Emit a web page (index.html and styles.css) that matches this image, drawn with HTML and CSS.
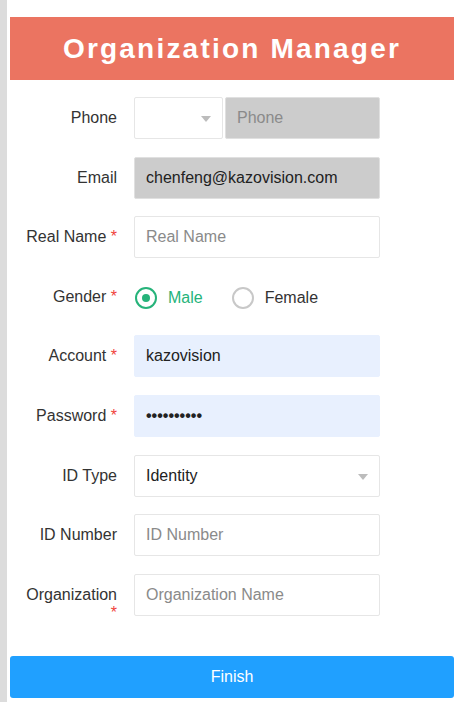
FILE: index.html
```html
<!DOCTYPE html>
<html lang="en">
<head>
<meta charset="utf-8">
<title>Organization Manager</title>
<link rel="stylesheet" href="styles.css">
</head>
<body>
<div class="strip"></div>
<div class="main">
  <header class="banner">Organization Manager</header>
  <form class="form">
    <div class="row">
      <label class="label">Phone</label>
      <div class="field phone">
        <div class="select small"><span class="arrow"></span></div>
        <div class="input disabled"><span class="ph">Phone</span></div>
      </div>
    </div>
    <div class="row">
      <label class="label">Email</label>
      <div class="field">
        <div class="input disabled"><span class="val">chenfeng@kazovision.com</span></div>
      </div>
    </div>
    <div class="row">
      <label class="label">Real Name <span class="req">*</span></label>
      <div class="field">
        <div class="input"><span class="ph">Real Name</span></div>
      </div>
    </div>
    <div class="row">
      <label class="label">Gender <span class="req">*</span></label>
      <div class="field radios">
        <span class="radio checked"><span class="dot"></span></span><span class="rlabel on">Male</span>
        <span class="radio"></span><span class="rlabel">Female</span>
      </div>
    </div>
    <div class="row">
      <label class="label">Account <span class="req">*</span></label>
      <div class="field">
        <div class="input auto"><span class="val">kazovision</span></div>
      </div>
    </div>
    <div class="row">
      <label class="label">Password <span class="req">*</span></label>
      <div class="field">
        <div class="input auto"><span class="val pw">••••••••••</span></div>
      </div>
    </div>
    <div class="row">
      <label class="label">ID Type</label>
      <div class="field">
        <div class="select"><span class="val">Identity</span><span class="arrow"></span></div>
      </div>
    </div>
    <div class="row">
      <label class="label">ID Number</label>
      <div class="field">
        <div class="input"><span class="ph">ID Number</span></div>
      </div>
    </div>
    <div class="row">
      <label class="label">Organization<br><span class="req">*</span></label>
      <div class="field">
        <div class="input"><span class="ph">Organization Name</span></div>
      </div>
    </div>
  </form>
  <button class="finish" type="button">Finish</button>
</div>
</body>
</html>
```
FILE: styles.css
```css
* { box-sizing: border-box; }
html, body { margin: 0; padding: 0; background: #fff; }
body {
  display: flex;
  font-family: "Liberation Sans", Arial, sans-serif;
  font-size: 16px;
  color: #333;
  width: 456px;
  height: 702px;
  overflow: hidden;
}
.strip {
  width: 7px;
  flex: none;
  background: #dcdcdc;
}
.main {
  width: 444px;
  margin-left: 3px;
  padding-top: 17px;
}
.banner {
  height: 63px;
  background: #eb7461;
  color: #fff;
  font-weight: bold;
  font-size: 28px;
  letter-spacing: 2.2px;
  display: flex;
  align-items: center;
  justify-content: center;
  padding-top: 1px;
}
.form {
  display: flex;
  flex-direction: column;
  gap: 17.6px;
  padding-top: 17px;
}
.row {
  display: flex;
  align-items: flex-start;
  gap: 17px;
  height: 42px;
}
.label {
  width: 107px;
  flex: none;
  text-align: right;
  line-height: 18px;
  padding-top: 12px;
  color: #333;
}
.req { color: #f0443c; }
.field {
  width: 246px;
  height: 42px;
  display: flex;
  align-items: center;
}
.phone { gap: 2px; }
.input, .select {
  height: 42px;
  width: 100%;
  border: 1px solid #e6e6e6;
  border-radius: 2px;
  padding-left: 11px;
  display: flex;
  align-items: center;
  position: relative;
  background: #fff;
}
.select.small { width: 89px; flex: none; }
.phone .input { flex: 1; }
.disabled { background: #cccccc; border-color: #e0e0e0; }
.auto { background: #e8f0fe; border-color: #e8f0fe; }
.ph { color: #8a8a8a; }
.val { color: #222; }
.pw { font-size: 16px; font-weight: bold; letter-spacing: 0; }
.arrow {
  position: absolute;
  right: 11px;
  top: 18px;
  width: 0;
  height: 0;
  border-left: 5.5px solid transparent;
  border-right: 5.5px solid transparent;
  border-top: 6px solid #bcbcbc;
}
.radios { padding-left: 1px; padding-top: 3px; }
.radio {
  width: 22px;
  height: 22px;
  border-radius: 50%;
  border: 2px solid #c8c8c8;
  display: flex;
  align-items: center;
  justify-content: center;
  flex: none;
}
.radio.checked { border-color: #26b37a; }
.dot {
  width: 8px;
  height: 8px;
  border-radius: 50%;
  background: #26b37a;
}
.rlabel { margin-left: 11px; margin-right: 29px; color: #333; }
.rlabel.on { color: #26b37a; }
.finish {
  display: block;
  width: 444px;
  height: 42px;
  margin-top: 40px;
  border: none;
  border-radius: 3px;
  background: #20a0ff;
  color: #fff;
  font-family: "Liberation Sans", Arial, sans-serif;
  font-size: 16px;
  padding: 0;
}
```
